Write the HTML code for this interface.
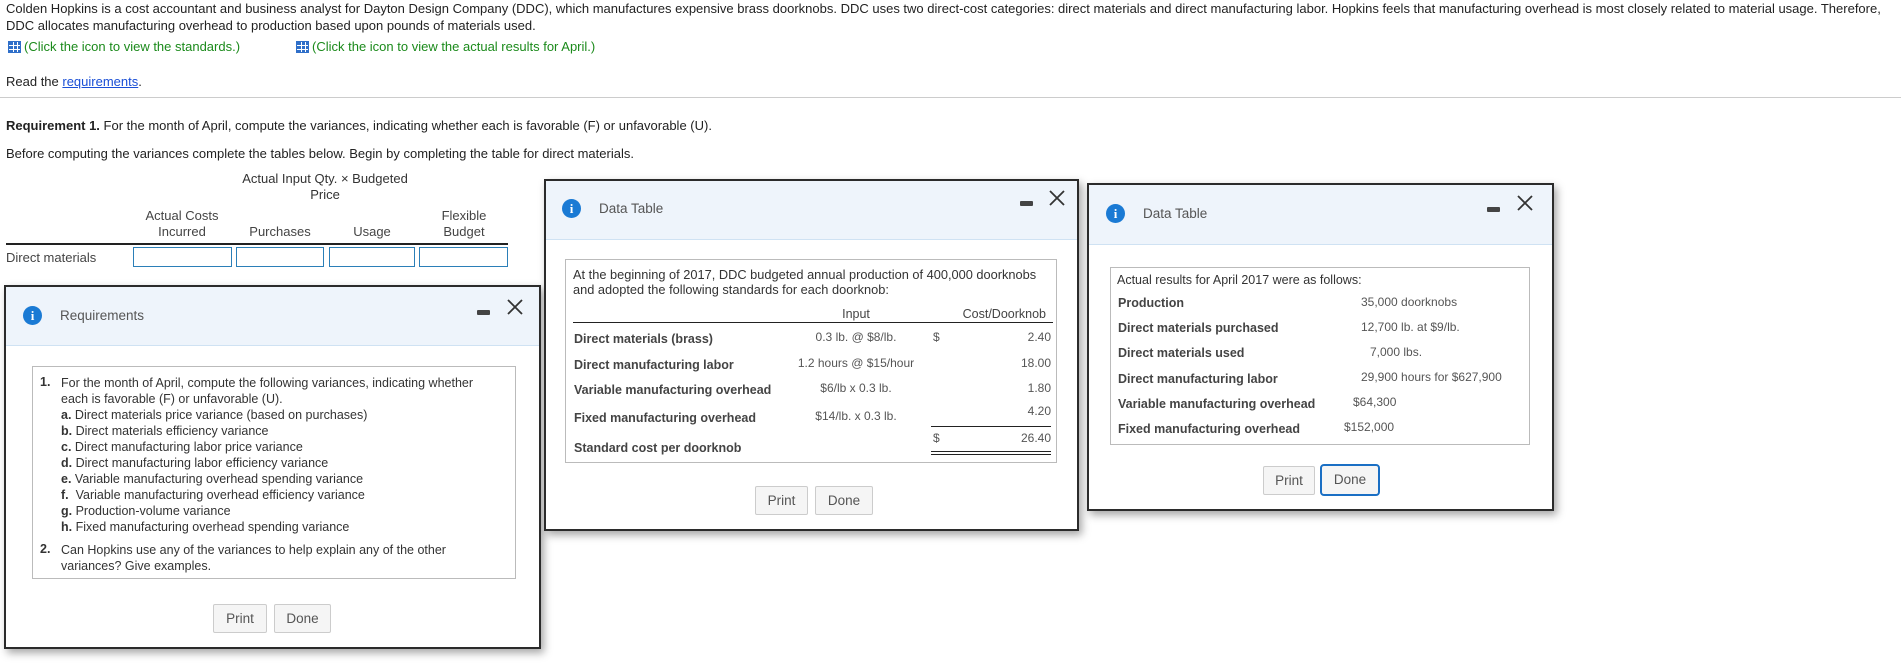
<!DOCTYPE html>
<html><head><meta charset="utf-8"><style>
*{box-sizing:border-box;margin:0;padding:0}
body{width:1901px;height:663px;overflow:hidden;background:#fff;font-family:"Liberation Sans",Arial,sans-serif;color:#222;position:relative;font-size:13px}
.a{position:absolute;white-space:nowrap}
.g{color:#1b8a1b}
.ic{display:inline-block;width:13px;height:12px;vertical-align:-2px;margin-right:3px;background:
linear-gradient(#fff,#fff) 4px 0/1px 12px no-repeat,linear-gradient(#fff,#fff) 8px 0/1px 12px no-repeat,
linear-gradient(#fff,#fff) 0 3px/13px 1px no-repeat,linear-gradient(#fff,#fff) 0 7px/13px 1px no-repeat,#2f6fc9;border:1px solid #2f6fc9}
.inp{position:absolute;top:247px;height:20px;border:1px solid #2b7fb8}
.dlg{position:absolute;background:#fff;border:2px solid #2b2b2b;box-shadow:3px 4px 8px rgba(0,0,0,.35)}
.hd{position:absolute;left:0;right:0;top:0;background:#eef4fb;border-bottom:1px solid #cfe2f3}
.info{position:absolute;width:19px;height:19px;border-radius:50%;background:#1a7ad4;color:#fff;font:bold 13px "Liberation Serif",serif;text-align:center;line-height:19px}
.tt{position:absolute;font-size:13.5px;color:#555}
.mn{position:absolute;width:13px;height:5px;background:#444;border-radius:1px}
.x{position:absolute;width:18px;height:18px}
.box{position:absolute;border:1px solid #bbb}
.btn{position:absolute;border:1px solid #ccc;border-radius:2px;background:#f5f5f5;color:#555;font-size:13.5px;text-align:center;line-height:27px;height:29px}
.b{font-weight:bold;color:#444}
.v{color:#555}
</style></head><body>
<div class="a" style="left:6px;top:1px;line-height:16.5px;white-space:normal;width:1890px">Colden Hopkins is a cost accountant and business analyst for Dayton Design Company (DDC), which manufactures expensive brass doorknobs. DDC uses two direct-cost categories: direct materials and direct manufacturing labor. Hopkins feels that manufacturing overhead is most closely related to material usage. Therefore, DDC allocates manufacturing overhead to production based upon pounds of materials used.</div>
<div class="a g" style="left:8px;top:39px"><span class="ic"></span>(Click the icon to view the standards.)</div>
<div class="a g" style="left:296px;top:39px"><span class="ic"></span>(Click the icon to view the actual results for April.)</div>
<div class="a" style="left:6px;top:74px">Read the <span style="color:#1a4fd6;text-decoration:underline">requirements</span>.</div>
<div class="a" style="left:0;top:97px;width:1901px;height:1px;background:#ccc"></div>
<div class="a" style="left:6px;top:118px"><b>Requirement 1.</b> For the month of April, compute the variances, indicating whether each is favorable (F) or unfavorable (U).</div>
<div class="a" style="left:6px;top:146px">Before computing the variances complete the tables below. Begin by completing the table for direct materials.</div>
<div class="a" style="left:225px;top:171px;width:200px;text-align:center;line-height:16px;color:#333">Actual Input Qty. × Budgeted<br>Price</div>
<div class="a" style="left:132px;top:208px;width:100px;text-align:center;line-height:16px;color:#444">Actual Costs<br>Incurred</div>
<div class="a" style="left:236px;top:224px;width:88px;text-align:center;color:#444">Purchases</div>
<div class="a" style="left:329px;top:224px;width:86px;text-align:center;color:#444">Usage</div>
<div class="a" style="left:419px;top:208px;width:90px;text-align:center;line-height:16px;color:#444">Flexible<br>Budget</div>
<div class="a" style="left:6px;top:243px;width:502px;height:2px;background:#222"></div>
<div class="a" style="left:6px;top:250px;color:#444">Direct materials</div>
<div class="inp" style="left:133px;width:99px"></div>
<div class="inp" style="left:236px;width:88px"></div>
<div class="inp" style="left:329px;width:86px"></div>
<div class="inp" style="left:419px;width:89px"></div>

<!-- Requirements dialog -->
<div class="dlg" style="left:4px;top:285px;width:537px;height:364px">
<div class="hd" style="height:59px"></div>
<div class="info" style="left:17px;top:19px">i</div>
<div class="tt" style="left:54px;top:21px">Requirements</div>
<div class="mn" style="left:471px;top:23px"></div>
<svg class="x" style="left:500px;top:11px" viewBox="0 0 18 18"><path d="M2 2L16 16M16 2L2 16" stroke="#333" stroke-width="1.8"/></svg>
<div class="box" style="left:26px;top:79px;width:484px;height:213px"></div>
<div class="a" style="left:34px;top:88px;font-size:12.5px;color:#333"><b>1.</b></div>
<div class="a" style="left:55px;top:88px;font-size:12.5px;line-height:16px;color:#333">For the month of April, compute the following variances, indicating whether<br>each is favorable (F) or unfavorable (U).<br><b>a.</b> Direct materials price variance (based on purchases)<br><b>b.</b> Direct materials efficiency variance<br><b>c.</b> Direct manufacturing labor price variance<br><b>d.</b> Direct manufacturing labor efficiency variance<br><b>e.</b> Variable manufacturing overhead spending variance<br><b>f.</b>&nbsp; Variable manufacturing overhead efficiency variance<br><b>g.</b> Production-volume variance<br><b>h.</b> Fixed manufacturing overhead spending variance</div>
<div class="a" style="left:34px;top:255px;font-size:12.5px;color:#333"><b>2.</b></div>
<div class="a" style="left:55px;top:255px;font-size:12.5px;line-height:16px;color:#333">Can Hopkins use any of the variances to help explain any of the other<br>variances? Give examples.</div>
<div class="btn" style="left:207px;top:317px;width:54px">Print</div>
<div class="btn" style="left:268px;top:317px;width:57px">Done</div>
</div>

<!-- Data table 1 -->
<div class="dlg" style="left:544px;top:179px;width:535px;height:352px">
<div class="hd" style="height:59px"></div>
<div class="info" style="left:16px;top:18px">i</div>
<div class="tt" style="left:53px;top:20px">Data Table</div>
<div class="mn" style="left:474px;top:20px"></div>
<svg class="x" style="left:502px;top:8px" viewBox="0 0 18 18"><path d="M2 2L16 16M16 2L2 16" stroke="#333" stroke-width="1.8"/></svg>
<div class="box" style="left:19px;top:78px;width:492px;height:204px"></div>
<div class="a" style="left:27px;top:86px;font-size:12.8px;line-height:15px;color:#333">At the beginning of 2017, DDC budgeted annual production of 400,000 doorknobs<br>and adopted the following standards for each doorknob:</div>
<div class="a v" style="left:270px;top:126px;width:80px;text-align:center;font-size:12.5px;color:#444">Input</div>
<div class="a v" style="left:400px;top:126px;width:100px;text-align:right;font-size:12.5px;color:#444">Cost/Doorknob</div>
<div class="a" style="left:27px;top:141px;width:480px;height:1px;background:#222"></div>
<div class="a b" style="left:28px;top:151px;font-size:12.5px">Direct materials (brass)</div>
<div class="a b" style="left:28px;top:177px;font-size:12.5px">Direct manufacturing labor</div>
<div class="a b" style="left:28px;top:202px;font-size:12.5px">Variable manufacturing overhead</div>
<div class="a b" style="left:28px;top:230px;font-size:12.5px">Fixed manufacturing overhead</div>
<div class="a b" style="left:28px;top:260px;font-size:12.5px">Standard cost per doorknob</div>
<div class="a v" style="left:230px;top:149px;width:160px;text-align:center;font-size:12px">0.3 lb. @ $8/lb.</div>
<div class="a v" style="left:230px;top:175px;width:160px;text-align:center;font-size:12px">1.2 hours @ $15/hour</div>
<div class="a v" style="left:230px;top:200px;width:160px;text-align:center;font-size:12px">$6/lb x 0.3 lb.</div>
<div class="a v" style="left:230px;top:228px;width:160px;text-align:center;font-size:12px">$14/lb. x 0.3 lb.</div>
<div class="a v" style="left:387px;top:149px;font-size:12px">$</div>
<div class="a v" style="left:440px;top:149px;width:65px;text-align:right;font-size:12px">2.40</div>
<div class="a v" style="left:440px;top:175px;width:65px;text-align:right;font-size:12px">18.00</div>
<div class="a v" style="left:440px;top:200px;width:65px;text-align:right;font-size:12px">1.80</div>
<div class="a v" style="left:440px;top:223px;width:65px;text-align:right;font-size:12px">4.20</div>
<div class="a" style="left:385px;top:245px;width:120px;height:1px;background:#222"></div>
<div class="a v" style="left:387px;top:250px;font-size:12px">$</div>
<div class="a v" style="left:440px;top:250px;width:65px;text-align:right;font-size:12px">26.40</div>
<div class="a" style="left:385px;top:270px;width:120px;height:4px;border-top:1px solid #222;border-bottom:1px solid #222"></div>
<div class="btn" style="left:209px;top:305px;width:53px">Print</div>
<div class="btn" style="left:269px;top:305px;width:58px">Done</div>
</div>

<!-- Data table 2 -->
<div class="dlg" style="left:1087px;top:183px;width:467px;height:328px">
<div class="hd" style="height:60px"></div>
<div class="info" style="left:17px;top:19px">i</div>
<div class="tt" style="left:54px;top:21px">Data Table</div>
<div class="mn" style="left:398px;top:22px"></div>
<svg class="x" style="left:427px;top:9px" viewBox="0 0 18 18"><path d="M2 2L16 16M16 2L2 16" stroke="#333" stroke-width="1.8"/></svg>
<div class="box" style="left:21px;top:82px;width:420px;height:178px"></div>
<div class="a" style="left:28px;top:88px;font-size:12.5px;color:#333">Actual results for April 2017 were as follows:</div>
<div class="a b" style="left:29px;top:111px;font-size:12.5px">Production</div>
<div class="a b" style="left:29px;top:136px;font-size:12.5px">Direct materials purchased</div>
<div class="a b" style="left:29px;top:161px;font-size:12.5px">Direct materials used</div>
<div class="a b" style="left:29px;top:187px;font-size:12.5px">Direct manufacturing labor</div>
<div class="a b" style="left:29px;top:212px;font-size:12.5px">Variable manufacturing overhead</div>
<div class="a b" style="left:29px;top:237px;font-size:12.5px">Fixed manufacturing overhead</div>
<div class="a v" style="left:272px;top:110px;font-size:12px">35,000 doorknobs</div>
<div class="a v" style="left:272px;top:135px;font-size:12px">12,700 lb. at $9/lb.</div>
<div class="a v" style="left:281px;top:160px;font-size:12px">7,000 lbs.</div>
<div class="a v" style="left:272px;top:185px;font-size:12px">29,900 hours for $627,900</div>
<div class="a v" style="left:264px;top:210px;font-size:12px">$64,300</div>
<div class="a v" style="left:255px;top:235px;font-size:12px">$152,000</div>
<div class="btn" style="left:174px;top:281px;width:52px">Print</div>
<div class="btn" style="left:231px;top:279px;width:60px;height:32px;border:2px solid #1a6fc4;border-radius:4px;line-height:28px">Done</div>
</div>
</body></html>
